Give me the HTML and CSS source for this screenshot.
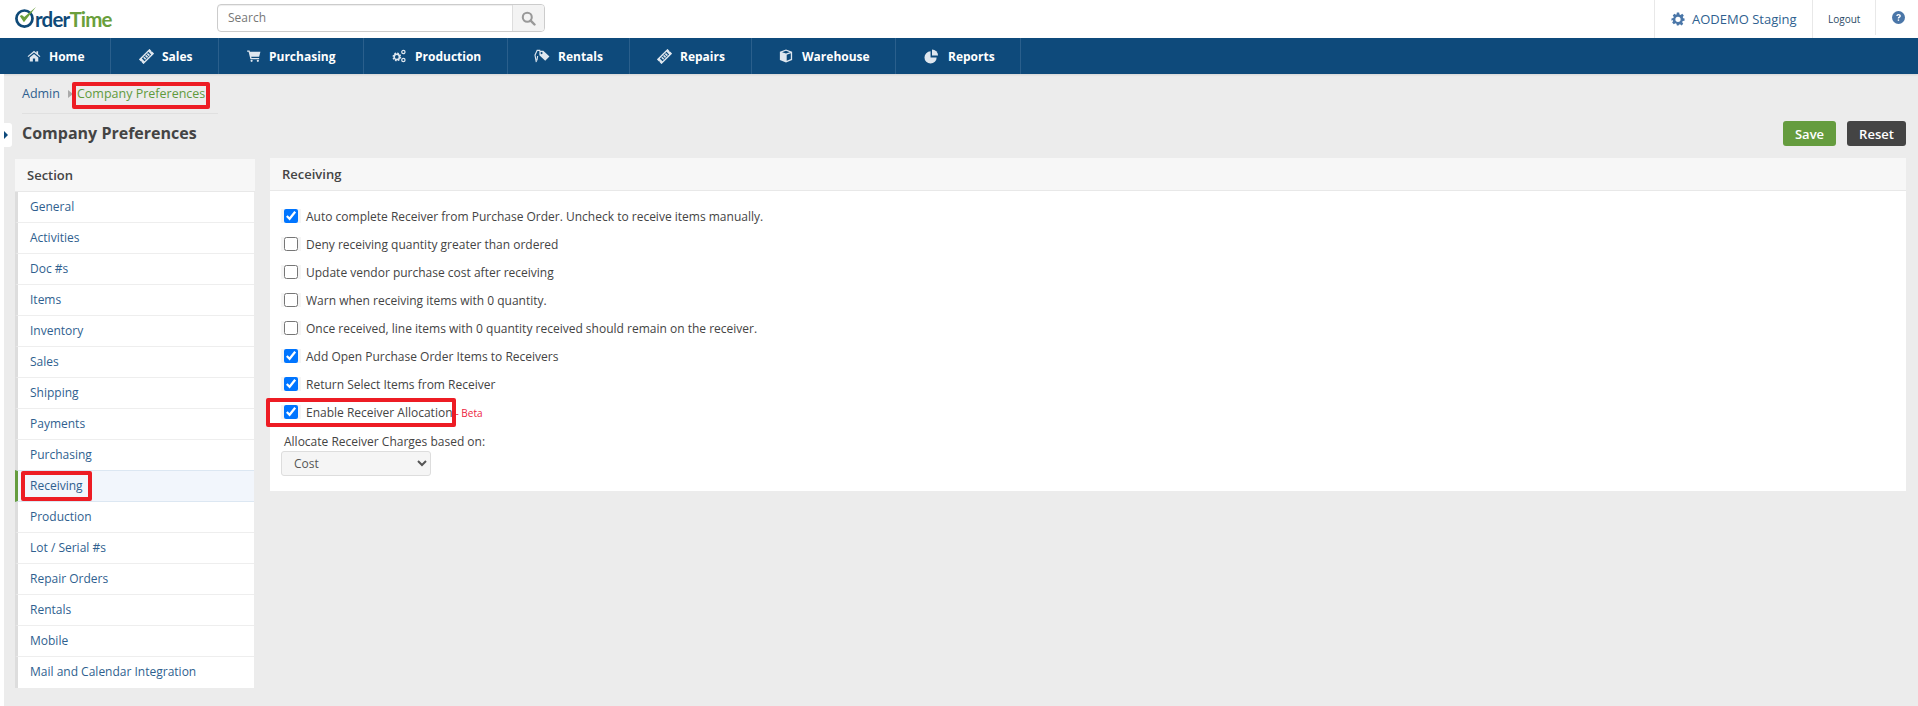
FILE: index.html
```html
<!DOCTYPE html>
<html lang="en">
<head>
<meta charset="utf-8">
<title>Company Preferences</title>
<link rel="stylesheet" href="styles.css">
</head>
<body>
<header class="topbar">
  <a class="logo">
    <svg class="logo-o" viewBox="0 0 22 22" width="23" height="23" aria-hidden="true">
      <circle cx="10" cy="12" r="7.700" fill="none" stroke="#0f4a78" stroke-width="2.600"/>
      <path d="M5.500 9.500 L9.500 15.500 L21 1 L9.800 10.500 L7.500 8.500 Z" fill="#6a9f3c"/>
    </svg><span class="logo-a">rder</span><span class="logo-b">Time</span>
  </a>
  <div class="search">
    <span class="search-input">Search</span>
    <span class="search-btn">
      <svg viewBox="0 0 16 16" width="15" height="15" aria-hidden="true"><circle cx="6.700" cy="6.700" r="4.800" fill="none" stroke="#999" stroke-width="2.200"/><path d="M10.300 10.300 L14.400 14.400" stroke="#999" stroke-width="2.600" stroke-linecap="round"/></svg>
    </span>
  </div>
  <div class="top-right">
    <a class="tr-company">
      <svg viewBox="0 0 24 24" width="14" height="14" aria-hidden="true"><path fill="#4a76a8" fill-rule="evenodd" d="M10 1h4l.6 3.200 1.900.8 2.700-1.800 2.800 2.800-1.800 2.700.8 1.900L23.200 11v4l-3.200.6-.8 1.900 1.800 2.700-2.800 2.800-2.700-1.800-1.900.8L13 23.200h-3l-.6-3.200-1.900-.8-2.700 1.800-2.800-2.800 1.800-2.700-.8-1.900L.8 15v-4L4 10.400l.8-1.900L3 5.800 5.800 3l2.700 1.800 1-.5zM12 8a4.500 4.500 0 1 0 0 9 4.500 4.500 0 0 0 0-9z"/></svg>
      <span>AODEMO Staging</span>
    </a>
    <a class="tr-logout">Logout</a>
    <a class="tr-help">
      <svg viewBox="0 0 24 24" width="13" height="13" aria-hidden="true"><circle cx="12" cy="12" r="12" fill="#4a76a8"/><path d="M8 9.300c0-2.400 1.800-3.800 4.100-3.800 2.400 0 4.200 1.400 4.200 3.500 0 1.800-1.100 2.600-2.200 3.300-.7.500-1 .8-1 1.700h-2.500c0-1.800.6-2.600 1.800-3.400.8-.5 1.300-.9 1.300-1.500 0-.8-.7-1.300-1.600-1.300-1 0-1.600.6-1.700 1.500z" fill="#fff"/><rect x="10.600" y="15.500" width="2.600" height="2.700" fill="#fff"/></svg>
    </a>
  </div>
</header>

<nav class="mainnav">
  <a class="nav-item w-home"><svg viewBox="0 0 16 14" width="14" height="12" aria-hidden="true"><path fill="#dfe7ef" d="M8 1 0.500 7.300l.9 1L8 2.800l6.600 5.500.9-1L12.800 5V1.500h-2v1.800zM3 8.800V13.500h3.700V9.800h2.600v3.700H13V8.800L8 4.600z"/></svg><span>Home</span></a>
  <a class="nav-item w-sales"><svg viewBox="0 0 16 16" width="15" height="15" aria-hidden="true"><g transform="rotate(-45 8 8)"><path fill="#dfe7ef" fill-rule="evenodd" d="M0 4.500h16v2.700a.9.9 0 0 0 0 1.600v2.700H0V8.800a.9.9 0 0 0 0-1.600zM3 6v4h10V6z"/><path fill="#dfe7ef" d="M4.500 6.500h1.700v3H4.500zM7.300 6.500h1.700v3H7.300zM10 6.500h1.700v3H10z"/></g></svg><span>Sales</span></a>
  <a class="nav-item w-purch"><svg viewBox="0 0 16 14" width="14" height="12" aria-hidden="true"><path fill="#dfe7ef" d="M0 .500h2.800l.5 1.500H15.500l-1.500 6H4.800l.3 1.300H14V10.800H3.800L1.700 2H0z"/><circle cx="5.200" cy="12.600" r="1.300" fill="#dfe7ef"/><circle cx="12.500" cy="12.600" r="1.300" fill="#dfe7ef"/></svg><span>Purchasing</span></a>
  <a class="nav-item w-prod"><svg viewBox="0 0 18 16" width="16" height="14" aria-hidden="true"><g fill="none" stroke="#dfe7ef"><circle cx="6.500" cy="9" r="3.700" stroke-width="2.600" stroke-dasharray="1.700 1.200"/><circle cx="6.500" cy="9" r="3" stroke-width="1.800"/><circle cx="14" cy="3.500" r="1.900" stroke-width="1.400"/><circle cx="14" cy="12.500" r="1.900" stroke-width="1.400"/></g></svg><span>Production</span></a>
  <a class="nav-item w-rent"><svg viewBox="0 0 18 16" width="16" height="14" aria-hidden="true"><path fill="none" stroke="#dfe7ef" stroke-width="1.300" d="M7 1.500H3.500L1 7l1.500 8M4 8l-.8 5"/><path fill="#dfe7ef" fill-rule="evenodd" d="M6 2h4.500l7 6.500-4.800 5L6 7zM8.500 3.500a1.200 1.200 0 1 0 0 2.400 1.200 1.200 0 0 0 0-2.400z"/></svg><span>Rentals</span></a>
  <a class="nav-item w-rep"><svg viewBox="0 0 16 16" width="15" height="15" aria-hidden="true"><g transform="rotate(-45 8 8)"><path fill="#dfe7ef" fill-rule="evenodd" d="M0 4.500h16v2.700a.9.9 0 0 0 0 1.600v2.700H0V8.800a.9.9 0 0 0 0-1.600zM3 6v4h10V6z"/><path fill="#dfe7ef" d="M4.500 6.500h1.700v3H4.500zM7.300 6.500h1.700v3H7.300zM10 6.500h1.700v3H10z"/></g></svg><span>Repairs</span></a>
  <a class="nav-item w-ware"><svg viewBox="0 0 16 16" width="14" height="14" aria-hidden="true"><path fill="#dfe7ef" d="M8 .500 1 3v9.500L8 15.500l7-3V3zM8 2l4.500 1.600L8 5.200 3.500 3.600zM8.800 6.500 13.500 4.800v6.700l-4.700 2z"/></svg><span>Warehouse</span></a>
  <a class="nav-item w-rep2"><svg viewBox="0 0 16 16" width="15" height="15" aria-hidden="true"><path fill="#dfe7ef" d="M7 2.500A6.500 6.500 0 1 0 13.500 9H7z"/><path fill="#dfe7ef" d="M8.500 .500A6.500 6.500 0 0 1 15 7H8.500z"/></svg><span>Reports</span></a>
</nav>

<div class="page">
  <button class="side-toggle" aria-label="Toggle"><span class="arrow"></span></button>
  <div class="breadcrumb">
    <a class="crumb">Admin</a><span class="crumb-sep"></span><a class="crumb-current">Company Preferences</a>
    <span class="mark mark-crumb"></span>
  </div>
  <div class="title-row">
    <h1>Company Preferences</h1>
    <div class="actions"><button class="btn btn-save">Save</button><button class="btn btn-reset">Reset</button></div>
  </div>
  <div class="columns">
    <aside class="side">
      <div class="side-head">Section</div>
      <ul class="side-list">
        <li>General</li><li>Activities</li><li>Doc #s</li><li>Items</li><li>Inventory</li><li>Sales</li><li>Shipping</li><li>Payments</li><li>Purchasing</li>
        <li class="active">Receiving<span class="mark mark-side"></span></li>
        <li>Production</li><li>Lot / Serial #s</li><li>Repair Orders</li><li>Rentals</li><li>Mobile</li><li>Mail and Calendar Integration</li>
      </ul>
    </aside>
    <main class="panel">
      <div class="panel-head">Receiving</div>
      <div class="panel-body">
        <label class="row"><span class="cb"><input type="checkbox" checked></span>Auto complete Receiver from Purchase Order. Uncheck to receive items manually.</label>
        <label class="row"><span class="cb"><input type="checkbox"></span>Deny receiving quantity greater than ordered</label>
        <label class="row"><span class="cb"><input type="checkbox"></span>Update vendor purchase cost after receiving</label>
        <label class="row"><span class="cb"><input type="checkbox"></span>Warn when receiving items with 0 quantity.</label>
        <label class="row"><span class="cb"><input type="checkbox"></span>Once received, line items with 0 quantity received should remain on the receiver.</label>
        <label class="row"><span class="cb"><input type="checkbox" checked></span>Add Open Purchase Order Items to Receivers</label>
        <label class="row"><span class="cb"><input type="checkbox" checked></span>Return Select Items from Receiver</label>
        <label class="row row-mark"><span class="cb"><input type="checkbox" checked></span>Enable Receiver Allocation<span class="beta">- Beta</span><span class="mark mark-row"></span></label>
        <div class="field-label">Allocate Receiver Charges based on:</div>
        <select class="sel"><option>Cost</option></select>
      </div>
    </main>
  </div>
</div>
</body>
</html>
```
FILE: styles.css
```css
* { box-sizing: border-box; }
html, body { margin: 0; height: 100%; }
body { font-family: "Open Sans", sans-serif; font-size: 12px; color: #444; background: #ececec; height: 706px; overflow: hidden; }
a { text-decoration: none; color: inherit; }

.topbar { height: 38px; background: #fff; display: flex; align-items: stretch; padding-left: 14px; }
.logo { display: flex; align-items: center; width: 203px; font-family: Lato, sans-serif; font-weight: 700; font-size: 20.500px; letter-spacing: -0.800px; padding-bottom: 1px; }
.logo-o { margin-right: -2px; margin-top: -2px; flex: none; }
.logo-a { color: #0f4a78; }
.logo-b { color: #6a9f3c; }
.search { width: 328px; height: 28px; margin-top: 4px; border: 1px solid #ccc; border-radius: 4px; display: flex; background: #fff; box-shadow: inset 0 1px 1px rgba(0,0,0,.07); }
.search-input { flex: 1; padding-left: 10px; line-height: 26px; color: #777; font-size: 12px; }
.search-btn { width: 32px; background: #f3f3f3; border-left: 1px solid #ddd; border-radius: 0 3px 3px 0; display: flex; align-items: center; justify-content: center; }
.top-right { margin-left: auto; display: flex; height: 38px; }
.tr-company { width: 158px; border-left: 1px solid #e8e8e8; display: flex; align-items: center; gap: 7px; padding-left: 16px; font-size: 13px; color: #2f5f8f; }
.tr-logout { width: 63px; border-left: 1px solid #e8e8e8; display: flex; align-items: center; padding-left: 15px; font-size: 10px; color: #2b4a66; }
.tr-help { width: 43px; height: 35px; border-left: 1px solid #e8e8e8; display: flex; align-items: center; padding-left: 16px; }

.mainnav { height: 36px; background: #0e4a7b; display: flex; box-shadow: 0 1px 2px rgba(0,0,0,.1); position: relative; }
.nav-item { display: flex; align-items: center; gap: 8px; padding-left: 27px; border-right: 1px solid #2a5f8c; color: #fff; font-weight: 700; font-size: 12px; }
.nav-item svg { flex: none; }
.w-home { width: 111px; }
.w-sales { width: 108px; padding-left: 28px; }
.w-purch { width: 145px; padding-left: 28px; }
.w-prod { width: 144px; padding-left: 27px; }
.w-rent { width: 122px; padding-left: 26px; }
.w-rep { width: 122px; padding-left: 27px; }
.w-ware { width: 144px; padding-left: 27px; gap: 9px; }
.w-rep2 { width: 125px; padding-left: 28px; gap: 9px; }

.page { position: relative; height: 632px; margin-left: 0; border-left: 4px solid #fff; padding: 0 12px 0 11px; }
.side-toggle { position: absolute; left: 0; top: 49px; width: 8px; height: 24px; padding: 0; border: 0; background: #fff; border-radius: 0 3px 3px 0; }
.arrow { position: absolute; left: 0; top: 8px; border-left: 4px solid #0e4a7b; border-top: 4px solid transparent; border-bottom: 4px solid transparent; }
.breadcrumb { position: relative; margin-left: 7px; width: 196px; height: 40px; padding-top: 11px; border-bottom: 1px solid #e0e0e0; display: flex; align-items: flex-start; line-height: 18px; }
.crumb { color: #2f5f8f; font-size: 12.500px; }
.crumb-sep { margin: 5px 4px 0 8px; border-left: 5px solid #aaa; border-top: 4px solid transparent; border-bottom: 4px solid transparent; }
.crumb-current { color: #5f9a3c; font-size: 12.500px; }
.mark { position: absolute; border: 4px solid #ed1c24; border-radius: 2px; pointer-events: none; }
.mark-crumb { left: 50px; top: 8px; width: 138px; height: 27px; }

.title-row { display: flex; justify-content: space-between; align-items: flex-start; height: 45px; padding-left: 7px; padding-top: 7px; }
h1 { margin: 0; font-size: 16px; line-height: 25px; font-weight: 700; color: #444; }
.actions { display: flex; gap: 11px; }
.btn { height: 25px; border: 0; border-radius: 3px; color: #fff; font-family: inherit; font-size: 13px; font-weight: 600; padding: 0; }
.btn-save { width: 53px; background: #659c3e; }
.btn-reset { width: 59px; background: #444; }

.columns { display: flex; align-items: flex-start; gap: 15px; margin-top: -1px; }
.side { width: 240px; flex: none; }
.side-head { height: 33px; margin-top: 1px; background: #f7f7f7; border-bottom: 1px solid #e8e8e8; padding-left: 12px; line-height: 33px; font-size: 13px; font-weight: 600; color: #444; }
.side-list { list-style: none; margin: 0; padding: 0; width: 239px; }
.side-list li { position: relative; height: 31px; line-height: 30px; background: #fff; border-left: 3px solid #ddd; border-bottom: 1px solid #eee; padding-left: 12px; color: #2f5f8f; }
.side-list li:last-child { border-bottom: 0; }
.side-list li.active { background: #f2f6fc; border-left-color: #659c3e; border-top: 1px solid #dce7f2; border-bottom: 1px solid #dce7f2; line-height: 29px; margin-top: -1px; height: 32px; }
.mark-side { left: 3px; top: 0; width: 71px; height: 30px; }

.panel { flex: 1; background: #fff; }
.panel-head { height: 33px; background: #f7f7f7; border-bottom: 1px solid #e8e8e8; padding-left: 12px; line-height: 32px; font-size: 13px; font-weight: 600; color: #444; }
.panel-body { padding: 11px 11px 15px; height: 300px; }
.row { position: relative; display: flex; align-items: center; height: 28px; color: #444; }
.cb { width: 20px; height: 14px; background: #f5f5f5; display: flex; align-items: center; justify-content: center; margin-right: 5px; }
.cb input { margin: 0; width: 14px; height: 14px; }
.beta { color: #ed1c3c; font-size: 10px; margin-left: 3px; padding-top: 2px; }
.mark-row { left: -15px; top: 0; width: 190px; height: 29px; }
.field-label { margin: 0 0 0 3px; line-height: 17px; margin-top: 7px; }
.sel { display: block; margin-top: 1px; width: 150px; height: 25px; padding-left: 8px; border: 1px solid #ddd; border-radius: 3px; background-color: #f5f5f5; color: #555; font-family: inherit; font-size: 12px; }
```
